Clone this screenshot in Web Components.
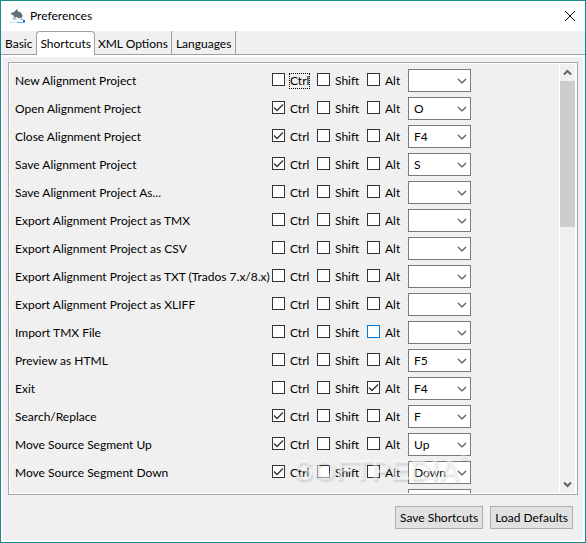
<!DOCTYPE html>
<html lang="en">
<head>
<meta charset="utf-8">
<title>Preferences</title>
<style>
  html, body {
    margin: 0;
    height: 100%;
  }

  body {
    font: 12px/16px Lato, "Open Sans", sans-serif;
    color: #000;
    background: #f0f0f0;
  }
</style>
</head>
<body>
<app-window>
  <title-bar slot="title">Preferences</title-bar>
  <tab-bar slot="tabs" labels="Basic,Shortcuts,XML Options,Languages" selected="Shortcuts"></tab-bar>
  <scroll-panel>
    <shortcut-row action="New Alignment Project" focused></shortcut-row>
    <shortcut-row action="Open Alignment Project" mods="Ctrl" key="O"></shortcut-row>
    <shortcut-row action="Close Alignment Project" mods="Ctrl" key="F4"></shortcut-row>
    <shortcut-row action="Save Alignment Project" mods="Ctrl" key="S"></shortcut-row>
    <shortcut-row action="Save Alignment Project As..."></shortcut-row>
    <shortcut-row action="Export Alignment Project as TMX"></shortcut-row>
    <shortcut-row action="Export Alignment Project as CSV"></shortcut-row>
    <shortcut-row action="Export Alignment Project as TXT (Trados 7.x/8.x)"></shortcut-row>
    <shortcut-row action="Export Alignment Project as XLIFF"></shortcut-row>
    <shortcut-row action="Import TMX File" hot="Alt"></shortcut-row>
    <shortcut-row action="Preview as HTML" key="F5"></shortcut-row>
    <shortcut-row action="Exit" mods="Alt" key="F4"></shortcut-row>
    <shortcut-row action="Search/Replace" mods="Ctrl" key="F"></shortcut-row>
    <shortcut-row action="Move Source Segment Up" mods="Ctrl" key="Up"></shortcut-row>
    <shortcut-row action="Move Source Segment Down" mods="Ctrl" key="Down"></shortcut-row>
    <shortcut-row></shortcut-row>
    <water-mark slot="overlay">SOFTPEDIA</water-mark>
  </scroll-panel>
  <push-button slot="actions">Save Shortcuts</push-button>
  <push-button slot="actions">Load Defaults</push-button>
</app-window>

<script>
// <app-window>
class AppWindow extends HTMLElement {
  constructor() {
    super();
    this.attachShadow({ mode: 'open' });
    this.shadowRoot.innerHTML = `
      <style>
        :host {
          display: flex;
          flex-direction: column;
          box-sizing: border-box;
          height: 100vh;
          border: 1px solid #188a8c;
          background: #fff;
        }
        main {
          display: flex;
          flex-direction: column;
          flex: 1;
          min-height: 0;
          margin: 2px;
          padding: 5px;
          background: #f0f0f0;
        }
        footer {
          display: flex;
          justify-content: flex-end;
          gap: 7px;
          padding: 11px 5px 6px;
        }
      </style>
      <slot name="title"></slot>
      <slot name="tabs"></slot>
      <main>
        <slot></slot>
        <footer><slot name="actions"></slot></footer>
      </main>
    `;
  }
}

customElements.define('app-window', AppWindow);

// <title-bar>
class TitleBar extends HTMLElement {
  constructor() {
    super();
    this.attachShadow({ mode: 'open' });
    this.shadowRoot.innerHTML = `
      <style>
        :host {
          display: flex;
          align-items: center;
          gap: 5px;
          height: 30px;
          padding: 0 9px 0 8px;
          box-sizing: border-box;
        }
        span {
          flex: 1;
        }
        button {
          display: flex;
          padding: 0;
          border: 0;
          background: none;
        }
      </style>
      <svg width="16" height="16" viewBox="0 0 16 16" aria-hidden="true">
        <path d="M2 5L5 4 8 1l1 2.500 3 1 1.500 3-.5 3-1.500-1L10 10.500 7.500 9 6 10 4.500 7.500 2 6z" fill="#607274"/>
        <path d="M4 8l1 2 3 1-1 1-3-1z" fill="#9cabb0"/>
        <path d="M0 14.500h6M3 11.500h3M6 13.500h4" stroke="#c4e1f7" fill="none"/>
        <path d="M8 14.500h8M11 11.500h3" stroke="#68aee8" fill="none"/>
        <path d="M14 12h2v2h-2z" fill="#1769be"/>
      </svg>
      <span><slot></slot></span>
      <button type="button" aria-label="Close">
        <svg width="12" height="12" viewBox="0 0 12 12">
          <path d="M1 1l10 10M11 1L1 11" stroke="#000" fill="none"/>
        </svg>
      </button>
    `;
  }
}

customElements.define('title-bar', TitleBar);

// <tab-bar>
class TabBar extends HTMLElement {
  constructor() {
    super();
    this.attachShadow({ mode: 'open' });
  }

  connectedCallback() {
    const selected = this.getAttribute('selected');
    const tabs = this.getAttribute('labels').split(',').map(label => `
      <button type="button" role="tab" aria-selected="${label === selected}">${label}</button>
    `).join('');

    this.shadowRoot.innerHTML = `
      <style>
        :host {
          display: block;
          background: #f0f0f0;
        }
        div {
          display: flex;
          height: 24px;
          box-shadow: inset 0 -1px #a0a0a0;
        }
        button {
          font: inherit;
          color: inherit;
          padding: 2px 4px 0;
          border: 0;
          border-right: 1px solid #a0a0a0;
          background: none;
        }
        button[aria-selected="true"] {
          padding: 1px 3px 0;
          border: 1px solid #a0a0a0;
          border-bottom: 0;
          border-radius: 4px 4px 0 0;
          background: #fff;
        }
        button:has(+ [aria-selected="true"]) {
          border-right: 0;
        }
        [aria-selected="true"] + button {
          padding-left: 3px;
          padding-right: 3px;
        }
      </style>
      <div role="tablist">${tabs}</div>
    `;
  }
}

customElements.define('tab-bar', TabBar);

// <scroll-panel>
class ScrollPanel extends HTMLElement {
  constructor() {
    super();
    this.attachShadow({ mode: 'open' });
    this.shadowRoot.innerHTML = `
      <style>
        :host {
          display: flex;
          flex: 1;
          min-height: 0;
          position: relative;
          border: 1px solid #a7a7ac;
        }
        .rows {
          display: flex;
          flex-direction: column;
          gap: 5px;
          flex: 1;
          min-width: 0;
          overflow: hidden;
          padding: 5px 5px 0;
          border: 1px solid #fff;
        }
        .bar {
          display: flex;
          flex-direction: column;
          width: 15px;
          border: 1px solid #fff;
          border-left: 0;
          border-right-width: 2px;
        }
        .bar button {
          display: flex;
          justify-content: center;
          align-items: center;
          height: 17px;
          padding: 0;
          border: 0;
          background: #f0f0f0;
        }
        .track {
          flex: 1;
          background: #f0f0f0;
        }
        .thumb {
          height: 37%;
          background: #cdcdcd;
        }
        path {
          fill: none;
          stroke: #606060;
          stroke-width: 2;
        }
      </style>
      <div class="rows"><slot></slot></div>
      <div class="bar">
        <button type="button" aria-label="Scroll up">
          <svg width="9" height="7" viewBox="0 0 9 7"><path d="M1 5.500L4.500 2 8 5.500"/></svg>
        </button>
        <div class="track"><div class="thumb"></div></div>
        <button type="button" aria-label="Scroll down">
          <svg width="9" height="7" viewBox="0 0 9 7"><path d="M1 1.500L4.500 5 8 1.500"/></svg>
        </button>
      </div>
      <slot name="overlay"></slot>
    `;
  }
}

customElements.define('scroll-panel', ScrollPanel);

// <mod-check>
class ModCheck extends HTMLElement {
  constructor() {
    super();
    this.attachShadow({ mode: 'open' });
    this.shadowRoot.innerHTML = `
      <style>
        :host {
          display: block;
        }
        label {
          display: flex;
          align-items: flex-start;
          gap: 4px;
        }
        .box {
          display: grid;
        }
        input, svg {
          grid-area: 1 / 1;
          width: 13px;
          height: 13px;
        }
        input {
          appearance: none;
          box-sizing: border-box;
          margin: 0;
          border: 1px solid #333;
          background: #fff;
        }
        svg {
          visibility: hidden;
          pointer-events: none;
        }
        input:checked + svg {
          visibility: visible;
        }
        :host([hot]) input {
          border-color: #0078d7;
        }
        .text {
          padding: 0 1px;
        }
        :host([focused]) .text {
          outline: 1px dotted #000;
          outline-offset: -1px;
        }
      </style>
      <label>
        <span class="box">
          <input type="checkbox">
          <svg viewBox="0 0 13 13"><path d="M2 6.500L5 9.500 11 3.500" fill="none" stroke="#333" stroke-width="1.300"/></svg>
        </span>
        <span class="text"><slot></slot></span>
      </label>
    `;
  }

  connectedCallback() {
    this.shadowRoot.querySelector('input').checked = this.hasAttribute('checked');
  }
}

customElements.define('mod-check', ModCheck);

// <key-select>
class KeySelect extends HTMLElement {
  constructor() {
    super();
    this.attachShadow({ mode: 'open' });
  }

  connectedCallback() {
    const key = this.getAttribute('key');
    this.shadowRoot.innerHTML = `
      <style>
        :host {
          display: grid;
          align-items: center;
        }
        select, svg {
          grid-area: 1 / 1;
        }
        select {
          appearance: none;
          box-sizing: border-box;
          width: 100%;
          height: 23px;
          padding: 0 16px 0 5px;
          border: 1px solid #7a7a7a;
          border-radius: 0;
          background: #fff;
          font: inherit;
          color: inherit;
        }
        svg {
          justify-self: end;
          margin-right: 4px;
          pointer-events: none;
        }
      </style>
      <select aria-label="${this.getAttribute('label')}"><option>${key}</option></select>
      <svg width="10" height="6" viewBox="0 0 10 6">
        <path d="M1 1l4 4 4-4" fill="none" stroke="#555" stroke-width="1.200"/>
      </svg>
    `;
  }
}

customElements.define('key-select', KeySelect);

// <shortcut-row>
class ShortcutRow extends HTMLElement {
  constructor() {
    super();
    this.attachShadow({ mode: 'open' });
  }

  connectedCallback() {
    const action = this.getAttribute('action') || '';
    const mods = (this.getAttribute('mods') || '').split(' ');
    const hot = this.getAttribute('hot');
    const checks = ['Ctrl', 'Shift', 'Alt'].map(name => {
      const checked = mods.includes(name) ? 'checked' : '';
      const focused = name === 'Ctrl' && this.hasAttribute('focused') ? 'focused' : '';
      return `<mod-check ${checked} ${focused} ${hot === name ? 'hot' : ''}>${name}</mod-check>`;
    }).join('');

    // rows without an action have no modifiers, only the key list
    this.shadowRoot.innerHTML = `
      <style>
        :host {
          display: grid;
          grid-template-columns: 257px 45px 50px 41px 63px;
          flex: none;
          height: 23px;
        }
        span, mod-check {
          padding-top: 4px;
          white-space: nowrap;
        }
        key-select {
          grid-column: 5;
        }
      </style>
      ${action ? `<span>${action}</span>${checks}` : ''}
      <key-select label="${action} key" key="${this.getAttribute('key') || ''}"></key-select>
    `;
  }
}

customElements.define('shortcut-row', ShortcutRow);

// <water-mark>
class WaterMark extends HTMLElement {
  constructor() {
    super();
    this.attachShadow({ mode: 'open' });
    this.shadowRoot.innerHTML = `
      <style>
        :host {
          position: absolute;
          left: 285px;
          bottom: 6px;
          display: flex;
          font: bold 29px/36px "Liberation Sans", sans-serif;
          color: rgba(255, 255, 255, 0.5);
          text-shadow: 1px 2px 2px rgba(0, 0, 0, 0.12);
          pointer-events: none;
        }
        sup {
          font-size: 9px;
          line-height: 12px;
        }
      </style>
      <slot></slot><sup>®</sup>
    `;
  }
}

customElements.define('water-mark', WaterMark);

// <push-button>
class PushButton extends HTMLElement {
  constructor() {
    super();
    this.attachShadow({ mode: 'open' });
    this.shadowRoot.innerHTML = `
      <style>
        :host {
          display: block;
        }
        button {
          height: 23px;
          padding: 0 4px;
          border: 1px solid #adadad;
          background: #e1e1e1;
          font: inherit;
          color: inherit;
          white-space: nowrap;
        }
      </style>
      <button type="button"><slot></slot></button>
    `;
  }
}

customElements.define('push-button', PushButton);
</script>
</body>
</html>
